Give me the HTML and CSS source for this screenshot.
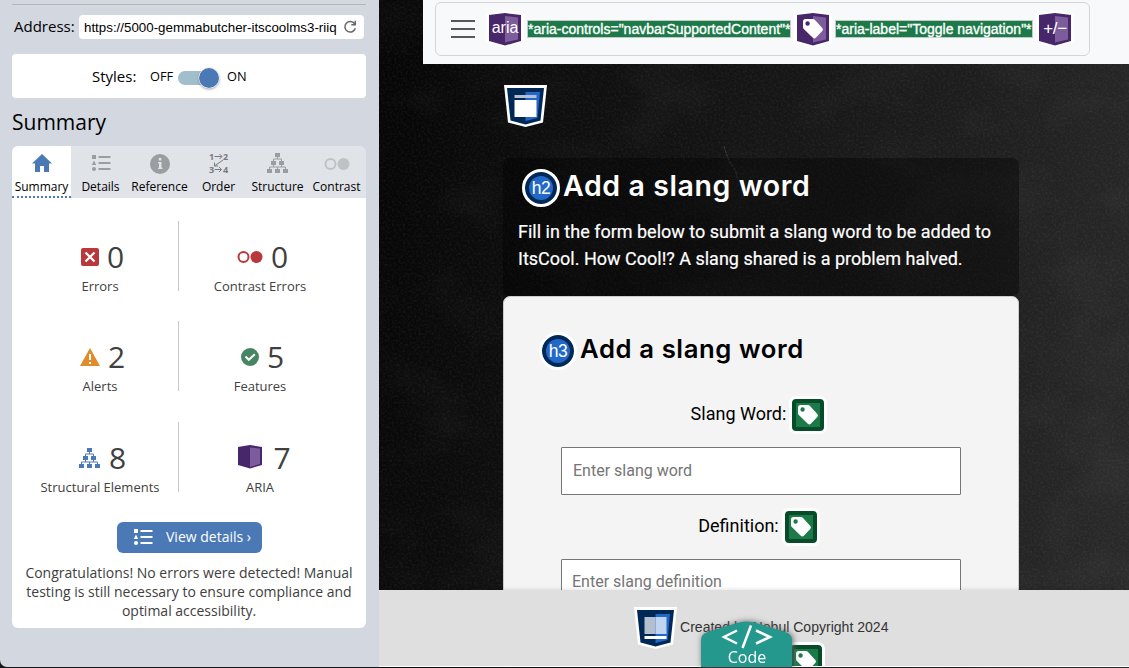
FILE: index.html
```html
<!DOCTYPE html>
<html lang="en">
<head>
<meta charset="utf-8">
<title>Add a slang word</title>
<link rel="stylesheet" href="styles.css">
</head>
<body>
<svg class="defs" width="0" height="0" aria-hidden="true">
  <defs>
    <symbol id="list" viewBox="0 0 20 18"><path d="M1 1h4v4H1zM3 6.500L5.200 11H.8zM7.500 2h12v2h-12zM7.500 8h12v2h-12zM7.500 14h12v2h-12z"/><circle cx="3" cy="15" r="2"/></symbol>
    <symbol id="tree" viewBox="0 0 22 20"><path d="M8 0h5v4H8zM4 8h5v4H4zM12 8h5v4h-5zM0 16h5v4H0zM8 16h5v4H8zM16 16h5v4h-5z"/><path d="M10.500 4v2M6.500 8V6h8v2M6.500 12v2M14.500 12v2M2.500 16v-2h16v2M10.500 14v2" fill="none" stroke="currentColor"/></symbol>
    <symbol id="tag" viewBox="0 0 22 22"><path fill-rule="evenodd" d="M3.500 1H11q1 0 1.800.8L20.300 10q1.300 1.500 0 2.900l-6.500 6.800q-1.500 1.500-3 0L2.300 11.500Q1 10.500 1 9V3.500Q1 1 3.500 1zM5.600 3.300a2.200 2.200 0 1 0 0 4.400 2.200 2.200 0 0 0 0-4.400z"/></symbol>
    <symbol id="book" viewBox="0 0 38 38"><path fill="#fff" d="M0 2.500L19 0l19 2.500v29L19 36 0 31.500z"/><path fill="#472669" d="M3 4l16-2 16 2v26l-16 4.500L3 30z"/><path fill="#7d5c9c" d="M19 5l13 1.500v22L19 31.500z"/></symbol>
    <symbol id="landmark" viewBox="0 0 43 43"><path fill="#fff" d="M0 0h43l-4 37.500L21.500 42 4 37.500z"/><path fill="#002857" d="M3 3h37l-3.500 32.500-15 4-15-4z"/><path fill="#2268c9" d="M21.500 7H36l-2.500 26-12 3z"/></symbol>
  </defs>
</svg>
<div class="window">
  <aside class="sidebar">
    <hr class="rule">
    <div class="address"><span class="address-label">Address:</span>
      <div class="url"><span class="url-text">https://5000-gemmabutcher-itscoolms3-riiq</span>
        <svg width="14" height="14" viewBox="0 0 14 14"><path fill="none" stroke="#666" stroke-width="1.500" d="M11.600 3.800A5.300 5.300 0 1 0 12.300 8.300M12.300 .8v3.900h-4"/></svg>
      </div>
    </div>
    <div class="styles-box"><span class="styles-label">Styles:</span><span class="off">OFF</span><span class="switch"><span class="knob"></span></span><span class="on">ON</span></div>
    <h1 class="title">Summary</h1>
    <nav class="tabs">
      <div class="tab active"><svg width="20" height="18" viewBox="0 0 20 18"><path fill="#4a79b5" d="M10 0l10 9.500h-3V18h-5v-6H8v6H3V9.500H0z"/></svg><span>Summary</span></div>
      <div class="tab"><svg width="20" height="18"><use href="#list"/></svg><span>Details</span></div>
      <div class="tab"><svg width="20" height="20" viewBox="0 0 20 20"><circle cx="10" cy="10" r="10"/><path fill="#e0e3e7" d="M8.800 4h2.500v2.500H8.800zM8 8h3.500v5.800h1V15H8v-1.200h1V9.200H8z"/></svg><span>Reference</span></div>
      <div class="tab order"><svg width="20" height="20" viewBox="0 0 20 20"><path fill="none" stroke="#777b7e" d="M5.500 3.500H13M10.500 1L13 3.500 10.500 6M5.500 16.500h7M10 14l2.500 2.500L10 19M14 7L5.500 13M5.500 9.500V13H9"/><g class="order-num"><text x="0" y="7">1</text><text x="14" y="7">2</text><text x="0" y="19.500">3</text><text x="14" y="19.500">4</text></g></svg><span>Order</span></div>
      <div class="tab"><svg width="22" height="20"><use href="#tree"/></svg><span>Structure</span></div>
      <div class="tab contrast"><svg width="26" height="20" viewBox="0 0 26 20"><circle cx="6.500" cy="10" r="5" fill="none" stroke="#bfc2c5" stroke-width="2"/><circle cx="19.500" cy="10" r="6" fill="#bfc2c5"/></svg><span>Contrast</span></div>
    </nav>
    <section class="panel">
      <div class="stats">
        <div class="stat left"><div class="count"><svg width="18" height="18" viewBox="0 0 18 18"><rect width="18" height="18" rx="2" fill="#b8383c"/><path d="M4.500 4.500l9 9M13.500 4.500l-9 9" stroke="#fff" stroke-width="2.200"/></svg><b>0</b></div><span>Errors</span></div>
        <div class="stat"><div class="count"><svg width="26" height="14" viewBox="0 0 26 14"><circle cx="6.500" cy="7" r="5" fill="none" stroke="#b8383c" stroke-width="2"/><circle cx="19.500" cy="7" r="6" fill="#b8383c"/></svg><b>0</b></div><span>Contrast Errors</span></div>
        <div class="stat left"><div class="count"><svg width="20" height="18" viewBox="0 0 20 18"><path fill="#e08c2b" d="M10 0l10 18H0z"/><path fill="#fff" d="M9 6h2v6H9zM9 14h2v2H9z"/></svg><b>2</b></div><span>Alerts</span></div>
        <div class="stat"><div class="count"><svg width="18" height="18" viewBox="0 0 18 18"><circle cx="9" cy="9" r="9" fill="#478564"/><path d="M4.500 8.500l3.300 3.300 6-5.600" fill="none" stroke="#fff" stroke-width="2"/></svg><b>5</b></div><span>Features</span></div>
        <div class="stat left"><div class="count"><svg class="blue" width="22" height="20"><use href="#tree"/></svg><b>8</b></div><span>Structural Elements</span></div>
        <div class="stat"><div class="count aria-count"><svg width="24" height="24" viewBox="0 0 24 24"><path fill="#472669" d="M0 2l12-2 12 2v18l-12 3.500L0 20z"/><path fill="#7d5c9c" d="M12 2.500l10 1V19l-10 3z"/></svg><b>7</b></div><span>ARIA</span></div>
      </div>
      <div class="button"><svg width="20" height="18"><use href="#list"/></svg><span>View details ›</span></div>
      <p class="note">Congratulations! No errors were detected! Manual<br>testing is still necessary to ensure compliance and<br>optimal accessibility.</p>
    </section>
  </aside>
  <main class="page">
    <svg class="chalk" width="750" height="590" aria-hidden="true">
      <filter id="grain" x="0" y="0" width="100%" height="100%"><feTurbulence type="fractalNoise" baseFrequency=".45" numOctaves="3" seed="8"/><feColorMatrix values="0 0 0 0 1  0 0 0 0 1  0 0 0 0 1  .5 .3 0 0 -.34"/></filter>
      <filter id="dust" x="0" y="0" width="100%" height="100%"><feTurbulence type="fractalNoise" baseFrequency=".012 .018" numOctaves="4" seed="4"/><feColorMatrix values="0 0 0 0 1  0 0 0 0 1  0 0 0 0 1  .35 0 0 0 -.15"/></filter>
      <rect width="750" height="590" filter="url(#grain)" opacity=".2"/><rect width="750" height="590" filter="url(#dust)" opacity=".2"/>
      <path d="M345 146q3 12 8 19t5 13" fill="none" stroke="#fff" stroke-opacity=".18" stroke-dasharray="3 1"/>
    </svg>
    <header class="topbar">
      <div class="toggler">
        <svg class="burger" width="24" height="20" viewBox="0 0 24 20"><path d="M0 2h24M0 10h24M0 18h24" stroke="#55575a" stroke-width="2"/></svg>
        <div class="aria"><svg width="38" height="38"><use href="#book"/></svg><span>aria</span></div>
        <span class="attr controls">*aria-controls="navbarSupportedContent"*</span>
        <div class="aria"><svg width="38" height="38"><use href="#book"/></svg><svg class="tag" width="22" height="22"><use href="#tag"/></svg></div>
        <span class="attr label-attr">*aria-label="Toggle navigation"*</span>
        <div class="aria last"><svg width="38" height="38"><use href="#book"/></svg><span>+/−</span></div>
      </div>
    </header>
    <div class="content">
      <svg class="main-mark" width="43" height="43" viewBox="0 0 43 43"><use href="#landmark"/><path fill="#fff" d="M10.500 15h22v17h-22z"/><path fill="#b5bfd3" d="M10.500 10h22v3h-22z"/></svg>
      <section class="intro">
        <div class="heading"><span class="level">h2</span><h2>Add a slang word</h2></div>
        <p>Fill in the form below to submit a slang word to be added to<br>ItsCool. How Cool!? A slang shared is a problem halved.</p>
      </section>
      <form class="card">
        <div class="heading"><span class="level">h3</span><h3>Add a slang word</h3></div>
        <div class="field word"><label><span>Slang Word:</span><i class="green"><svg width="22" height="22"><use href="#tag"/></svg></i></label><div class="input">Enter slang word</div></div>
        <div class="field definition"><label><span>Definition:</span><i class="green"><svg width="22" height="22"><use href="#tag"/></svg></i></label><div class="input">Enter slang definition</div></div>
      </form>
    </div>
    <footer class="footer">
      <svg width="43" height="43" viewBox="0 0 43 43"><use href="#landmark"/><path fill="#b3bfcf" d="M10.500 10h11v17h-11z"/><path fill="#bed4f0" d="M21.500 10h11v17h-11z"/><path fill="#fff" d="M10.500 29h22v3h-22z"/></svg>
      <span class="copyright">Created by Nobul Copyright 2024</span>
      <div class="foot-tag-clip"><i class="green"><svg width="22" height="22"><use href="#tag"/></svg></i></div>
      <div class="code-tab"><svg class="code-shape" width="91" height="46" viewBox="0 0 91 46"><path fill="#25988e" d="M0 46V19q0-6 7-8L36 2q9.500-3 19 0l29 9q7 2 7 8v27z"/><path d="M36 9.500L23 16l13 6.500M55 9.500L69 16l-14 6.500M50 4.500l-8.500 22.500" fill="none" stroke="#fff" stroke-width="2.500"/></svg><span>Code</span></div>
    </footer>
  </main>
</div>
</body>
</html>
```
FILE: styles.css
```css
* { box-sizing: border-box; }
body { margin: 0; background: #15171b; overflow: hidden; }
h1, h2, h3, p { margin: 0; font-weight: 400; }
svg { display: block; flex: none; fill: currentColor; }
.defs { position: absolute; }
.window { display: flex; width: 1129px; height: 668px; }

.sidebar { width: 379px; height: 667px; padding: 4px 13px 0 12px; background: #d3d8e0; border-bottom-left-radius: 7px; font-family: "Open Sans", sans-serif; color: #000; }
.rule { height: 1px; margin: 0; border: 0; background: #b2b7ba; }
.address { display: flex; align-items: center; height: 24px; margin: 10px 2px 0; }
.address-label { width: 65px; font-size: 15px; line-height: 20px; margin-top: -2px; white-space: nowrap; }
.url { flex: 1; height: 24px; display: flex; align-items: center; justify-content: space-between; background: #fff; border-radius: 4px; padding: 0 7px 0 5px; font: 13.33px "Liberation Sans", sans-serif; }
.url-text { white-space: nowrap; }
.styles-box { display: flex; align-items: center; height: 44px; margin-top: 15px; padding-left: 80px; background: #fff; border-radius: 4px; font-size: 12.8px; }
.styles-label { font-size: 15px; width: 58px; }
.off { width: 28px; }
.switch { width: 41px; height: 14px; border-radius: 7px; background: #a1bfca; display: flex; align-items: center; justify-content: flex-end; margin-top: 4px; }
.knob { width: 20px; height: 20px; border-radius: 50%; background: #4a79b5; box-shadow: 0 0 0 .5px #fff, 0 1px 3px #777; }
.on { margin-left: 8px; }
.title { font-size: 21px; line-height: 30px; margin-top: 9px; height: 39px; }
.tabs { display: flex; height: 52px; background: #e0e3e7; border-radius: 6px 6px 0 0; color: #9b9ea1; }
.tab { flex: 1; display: flex; flex-direction: column; align-items: center; height: 52px; padding-top: 8px; font-size: 12px; white-space: nowrap; }
.tab > svg { height: 20px; margin-top: -1px; overflow: visible; }
.tab:nth-child(3) > svg, .tab:nth-child(6) > svg { margin-top: 0; }
.tab:nth-child(3) > span, .tab:nth-child(6) > span { margin-top: 5px; }
.tab > span { line-height: 16px; margin-top: 6px; color: #000; }
.tab.active { background: #fff; border-radius: 6px 0 0; border-bottom: 2px dotted #4a79b5; }
.order-num { font: 700 9px "Open Sans", sans-serif; fill: #777b7e; }
.panel { height: 430px; padding-top: 23px; background: #fff; border-radius: 0 0 6px 6px; color: #404040; }
.stats { display: grid; grid-template-columns: 167px 162px; grid-template-rows: 70px 70px 70px; row-gap: 30.4px; }
.stat { display: flex; flex-direction: column; align-items: center; padding-top: 16px; font-size: 13px; }
.stat.left { border-right: 1px solid #c8c8c8; padding-left: 10px; }
.count { display: flex; align-items: center; justify-content: center; gap: 8px; height: 40px; padding-left: 5px; }
.count b { font-weight: 400; font-size: 30px; line-height: 40px; }
.stat > span { line-height: 18px; white-space: nowrap; }
.aria-count { gap: 11px; padding-left: 9px; }
.aria-count svg { margin-top: -2px; }
.blue { color: #4a79b5; }
.button { display: flex; align-items: center; gap: 13px; width: 145px; height: 31px; margin: 30px 0 0 105px; padding-left: 16px; border-radius: 6px; background: #4a79b5; color: #fff; font-size: 14px; white-space: nowrap; }
.button span { margin-top: -1px; }
.note { margin-top: 10px; font-size: 14px; line-height: 19px; text-align: center; white-space: nowrap; }

.page { position: relative; display: flex; flex-direction: column; width: 750px; height: 668px; overflow: hidden; background: linear-gradient(100deg, #050505 0%, #101010 30%, #1d1d1d 70%, #2b2b2b 100%); font-family: Roboto, sans-serif; }
.chalk { position: absolute; top: 0; left: 0; }
.topbar { position: relative; width: 706px; height: 64px; margin-left: 44px; padding: 2px 0 0 12px; background: #f8f9fb; }
.toggler { display: flex; align-items: center; width: 655px; height: 54px; padding-left: 15px; border: 1px solid #d3d5d8; border-radius: 6px; }
.aria { display: grid; place-items: center; width: 38px; height: 38px; margin: 2px 3px 0 11px; color: #fff; font: 16px "Liberation Sans", sans-serif; }
.aria > * { grid-area: 1 / 1; }
.aria > span { z-index: 1; margin-top: -4px; }
.aria.last > span { font-size: 17px; letter-spacing: -.3px; margin-top: -3px; }
.aria > .tag { margin-top: -2px; }
.attr { height: 18px; background: #1c7a49; border: 1px solid #c7c7c7; color: #fff; font: 14px/16px "Liberation Sans", sans-serif; -webkit-text-stroke: .35px #fff; white-space: nowrap; }
.controls { width: 264px; margin-right: -8px; }
.label-attr { width: 198px; margin-right: -8px; }
.content { position: relative; width: 516px; height: 526px; margin-left: 124px; overflow: hidden; }
.main-mark { margin: 21px 0 0 .5px; }
.intro { height: 138px; margin-top: 30px; padding: 7px 15px; background: rgba(0,0,0,.36); border-radius: 7px; color: #fff; }
.heading { display: flex; align-items: center; gap: 3px; }
.heading h2, .heading h3 { font-family: Inter, sans-serif; font-weight: 600; white-space: nowrap; letter-spacing: .6px; }
.level { display: grid; place-items: center; width: 38px; height: 38px; border: 3px solid #fff; border-radius: 50%; background: #2268c9; box-shadow: inset 0 0 0 4px #002857; color: #fff; font: 17.5px "Liberation Sans", sans-serif; letter-spacing: -.5px; }
.intro .heading { margin: 4px 0 0 4px; }
.intro h2 { font-size: 28.5px; line-height: 36px; margin-top: -5px; }
.intro p { margin-top: 11px; font-size: 18px; line-height: 27px; white-space: nowrap; -webkit-text-stroke: .2px #fff; }
.card { height: 300px; padding: 35px 57px 0; background: #f4f4f4; border: 1px solid #ccc; border-radius: 7px 7px 0 0; color: #000; }
.card .heading { margin-left: -22px; }
.card h3 { font-size: 25.7px; line-height: 32px; margin-top: -5px; }
.field { width: 400px; height: 112px; }
.word { margin-top: 26px; }
.field label { display: flex; align-items: center; justify-content: center; gap: 3px; height: 38px; font-size: 18px; padding-right: 4px; }
.field label > span { margin-top: -3px; }
.green { display: grid; place-items: center; width: 38px; height: 38px; border: 3px solid #fff; border-radius: 7px; background: #1c7a49; box-shadow: inset 0 0 0 4px #064c28; color: #fff; }
.input { width: 400px; height: 48px; margin-top: 13px; padding-left: 11px; border: 1px solid #767676; border-radius: 1px; background: #fff; color: #757575; font-size: 16px; line-height: 45px; }
.definition .input { padding-left: 10px; line-height: 43px; }
.footer { position: relative; display: flex; height: 77px; padding: 17px 0 0 255px; gap: 3px; flex: none; background: #dfdfdf; border-bottom: 1px solid #fff; box-shadow: 0 0 5px rgba(0,0,0,.15); color: #333; }
.copyright { padding-top: 12px; font: 14.05px/16px "Liberation Sans", sans-serif; white-space: nowrap; }
.foot-tag-clip { position: absolute; left: 408px; top: 52px; width: 38px; height: 24px; overflow: hidden; }
.code-tab { position: absolute; left: 322px; top: 31px; width: 91px; height: 46px; filter: drop-shadow(1px 0 3px #666); color: #fff; font: 16px/20px "Open Sans", sans-serif; }
.code-tab span { position: absolute; left: 1px; right: 0; bottom: 0; text-align: center; }
```
